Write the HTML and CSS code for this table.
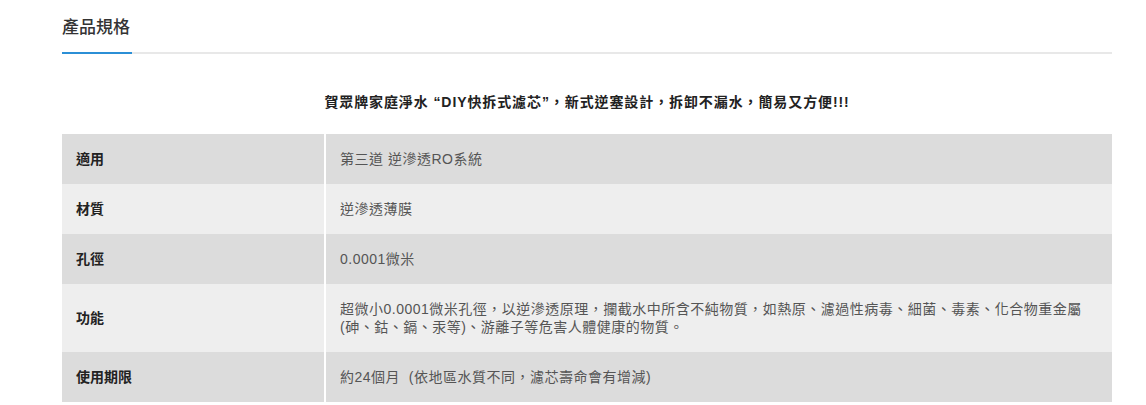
FILE: index.html
```html
<!DOCTYPE html>
<html lang="zh-Hant">
<head>
    <meta charset="UTF-8">
    <meta name="viewport" content="width=device-width, initial-scale=1.0">
    <title>產品規格</title>
    <link rel="stylesheet" href="styles.css">
</head>
<body>
    <div class="spec">
        <div class="spec-head">
            <h2 class="spec-title">產品規格</h2>
        </div>
        <p class="spec-intro">賀眾牌家庭淨水 <b>“DIY</b>快拆式濾芯<b>”</b>，新式逆塞設計，拆卸不漏水，簡易又方便!!!</p>
        <table class="spec-table">
            <tr>
                <th>適用</th>
                <td>第三道 逆滲透RO系統</td>
            </tr>
            <tr>
                <th>材質</th>
                <td>逆滲透薄膜</td>
            </tr>
            <tr>
                <th>孔徑</th>
                <td>0.0001微米</td>
            </tr>
            <tr>
                <th>功能</th>
                <td>超微小0.0001微米孔徑，以逆滲透原理，攔截水中所含不純物質，如熱原、濾過性病毒、細菌、毒素、化合物重金屬(砷、鈷、鎘、汞等)、游離子等危害人體健康的物質。</td>
            </tr>
            <tr>
                <th>使用期限</th>
                <td>約24個月&nbsp; (依地區水質不同，濾芯壽命會有增減)</td>
            </tr>
        </table>
    </div>
</body>
</html>
```

FILE: styles.css
```css
body {
    margin: 0;
    background-color: #fff;
    font-family: "Liberation Sans", "Noto Sans CJK TC", sans-serif;
    color: #333;
}
.spec {
    width: 1050px;
    margin-left: 62px;
}
.spec-head {
    position: relative;
    border-bottom: 2px solid #e8e8e8;
    padding: 16px 0 12px;
}
.spec-head::after {
    content: "";
    position: absolute;
    left: 0;
    bottom: -2px;
    width: 70px;
    height: 2px;
    background-color: #2b8fd6;
}
.spec-title {
    margin: 0;
    font-size: 17px;
    line-height: 24px;
    font-weight: 500;
    color: #333;
}
.spec-intro {
    margin: 38px 0 22px;
    text-align: center;
    font-size: 14px;
    line-height: 20px;
    font-weight: bold;
    color: #222;
    letter-spacing: 0.9px;
}
.spec-table {
    width: 100%;
    border-collapse: collapse;
}
.spec-table th,
.spec-table td {
    padding: 16px 14px;
    font-size: 14px;
    line-height: 18px;
    text-align: left;
    vertical-align: middle;
}
.spec-table th {
    width: 234px;
    border-right: 2px solid #fff;
    font-weight: bold;
    color: #222;
}
.spec-table td {
    color: #555;
    letter-spacing: 0.5px;
    padding-right: 24px;
}
.spec-table tr:nth-child(odd) {
    background-color: #dcdcdc;
}
.spec-table tr:nth-child(even) {
    background-color: #eeeeee;
}
```
